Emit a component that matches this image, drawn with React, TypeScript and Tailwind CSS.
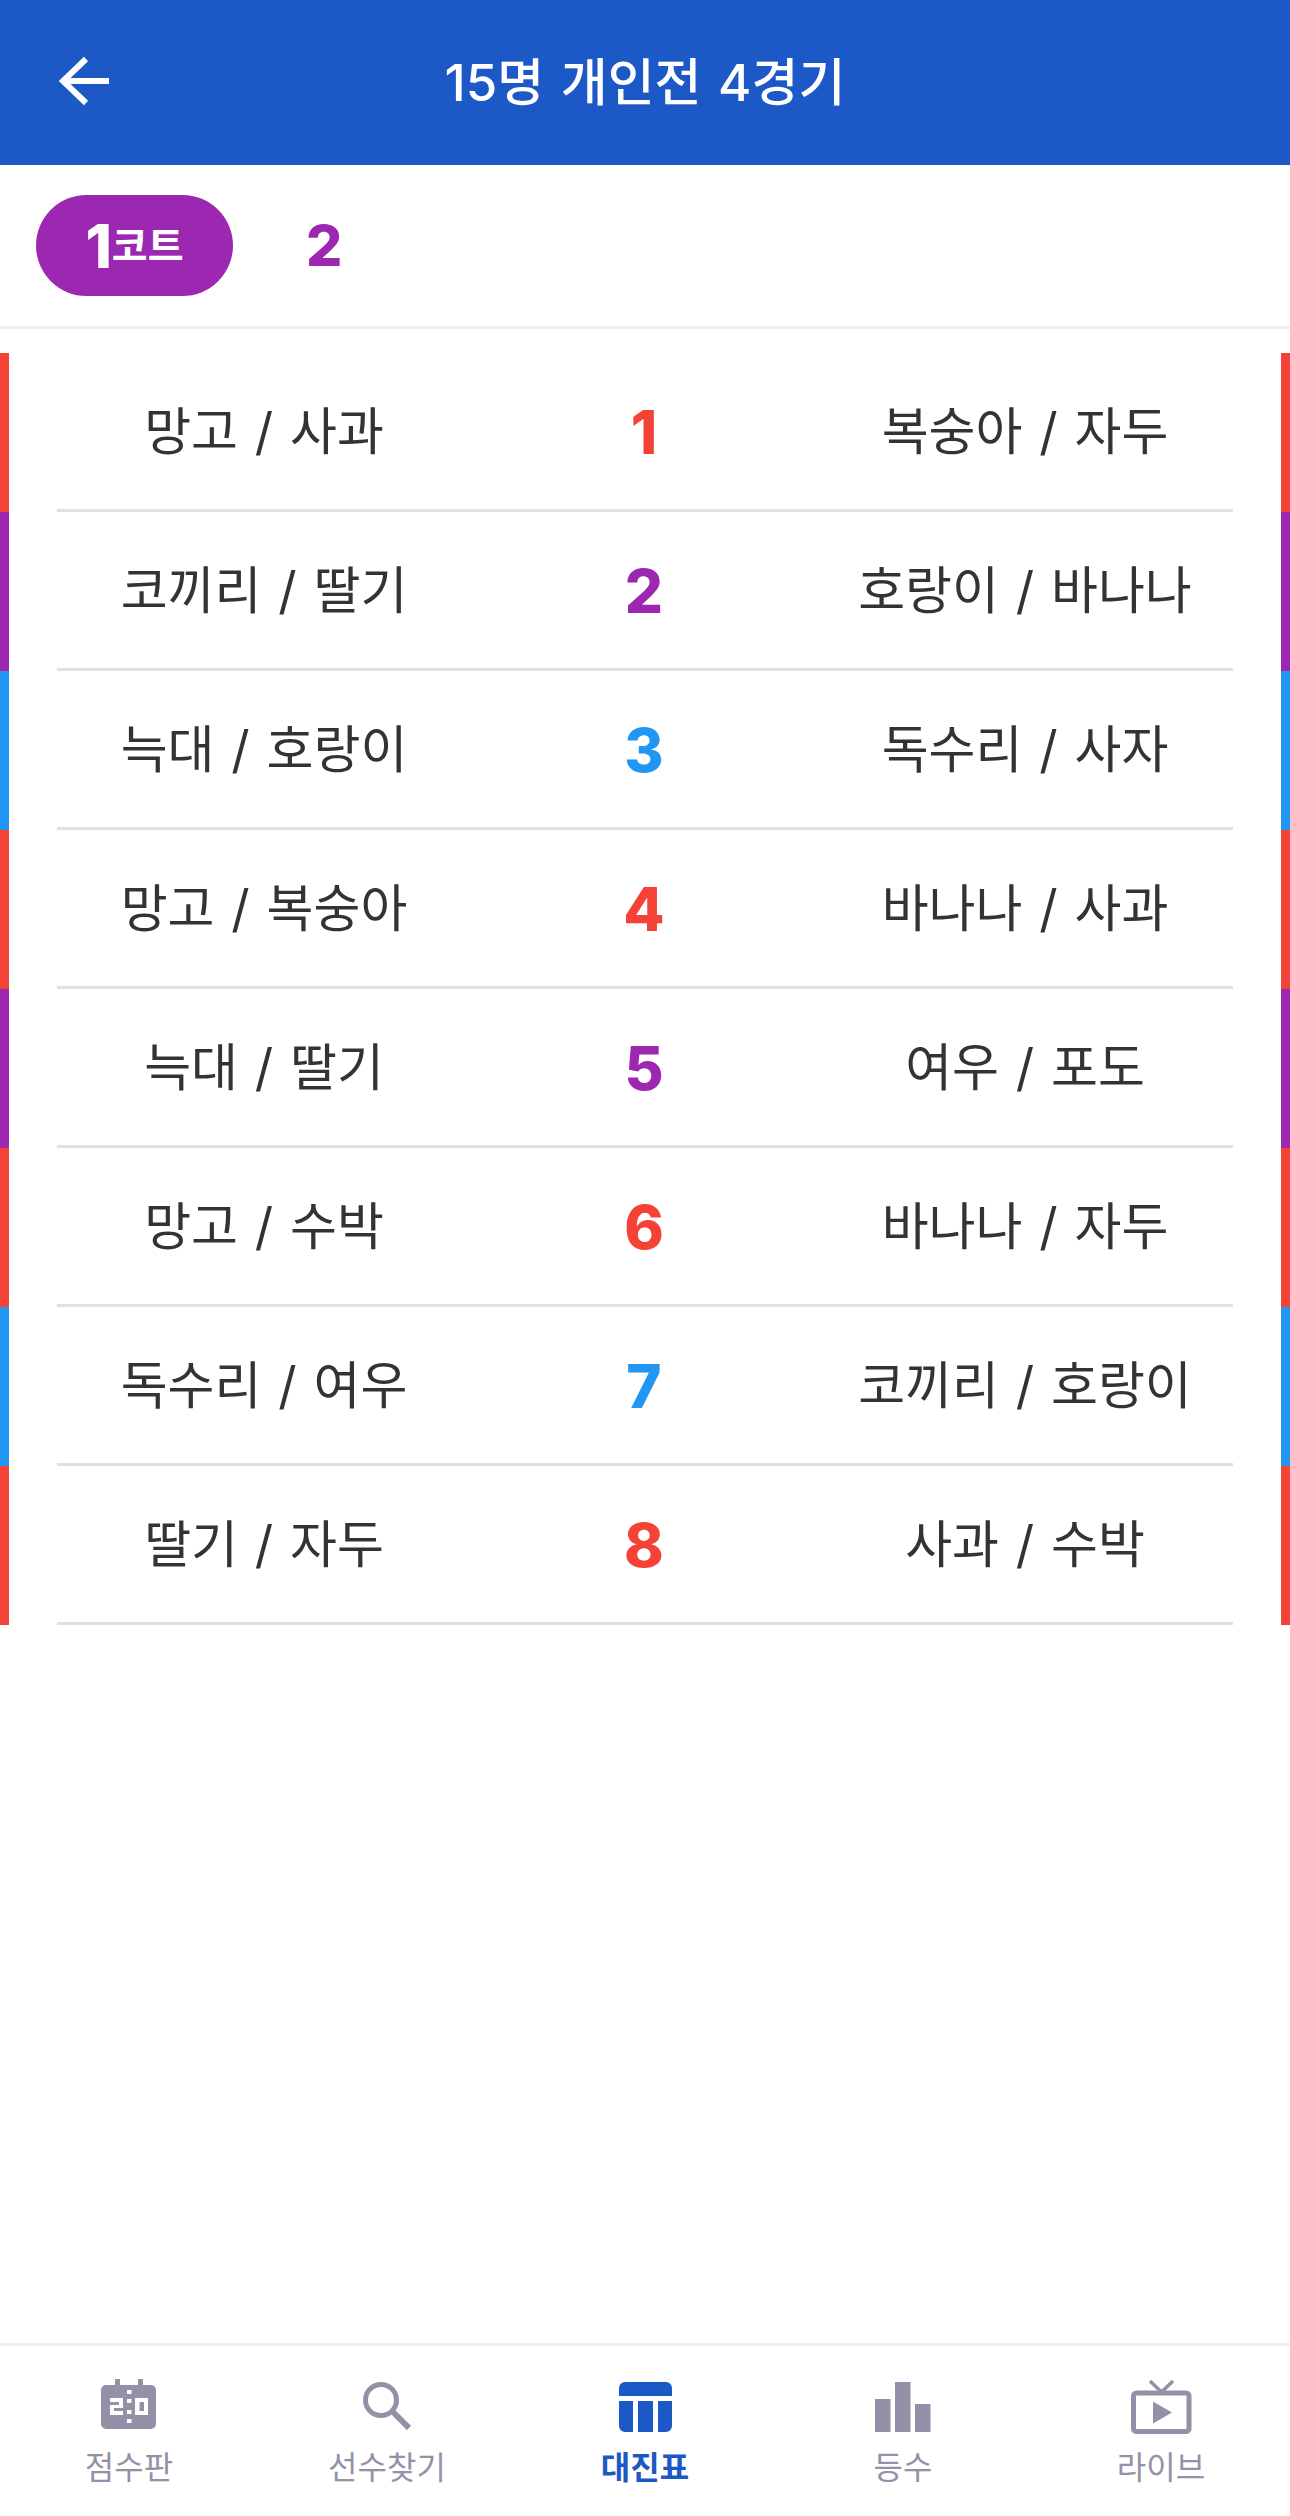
const font = { fontFamily: 'Inter, "Noto Sans CJK KR", "Liberation Sans", sans-serif' };

const rows: [string, string, string][] = [
  ["망고 / 사과", "복숭아 / 자두", "red"],
  ["코끼리 / 딸기", "호랑이 / 바나나", "purple"],
  ["늑대 / 호랑이", "독수리 / 사자", "blue"],
  ["망고 / 복숭아", "바나나 / 사과", "red"],
  ["늑대 / 딸기", "여우 / 포도", "purple"],
  ["망고 / 수박", "바나나 / 자두", "red"],
  ["독수리 / 여우", "코끼리 / 호랑이", "blue"],
  ["딸기 / 자두", "사과 / 수박", "red"],
];

const barClass: Record<string, string> = { red: "bg-[#f44336]", purple: "bg-[#9c27b0]", blue: "bg-[#2196f3]" };
const textClass: Record<string, string> = { red: "text-[#f44336]", purple: "text-[#9c27b0]", blue: "text-[#2196f3]" };

function Scoreboard() {
  return (
    <svg width="56" height="50" viewBox="0 0 56 50" className="text-[#9590a8]">
      <path fill="currentColor" d="M14 0h5v6h18V0h5v6h8a5 5 0 0 1 5 5v34a5 5 0 0 1-5 5H5a5 5 0 0 1-5-5V11a5 5 0 0 1 5-5h9z" />
      <g fill="#fff">
        <rect x="26" y="11" width="4.500" height="4" /><rect x="26" y="20" width="4.500" height="4" /><rect x="26" y="31" width="4.500" height="4" /><rect x="26" y="40" width="4.500" height="4" />
        <path d="M9 19h13v10H13v3h9v4H9V26h9v-3H9z" />
        <path fillRule="evenodd" d="M34 19h13v17H34zM38.500 23v9h4.500v-9z" />
      </g>
    </svg>
  );
}

function SearchIcon() {
  return (
    <svg width="48" height="48" viewBox="0 0 48 48" fill="none" stroke="currentColor" className="mt-[3px] text-[#9590a8]">
      <circle cx="18" cy="18" r="15.500" strokeWidth="5" />
      <path d="M29 29l17 17" strokeWidth="6" />
    </svg>
  );
}

function TableIcon() {
  return (
    <svg width="53" height="50" viewBox="0 0 53 50" className="mt-[3px] text-[#1c58c6]">
      <path fill="currentColor" d="M6 0h41a6 6 0 0 1 6 6v8H0V6a6 6 0 0 1 6-6zM0 19h14v31H6a6 6 0 0 1-6-6zM19 19h15v31H19zM39 19h14v25a6 6 0 0 1-6 6h-8z" />
    </svg>
  );
}

function BarsIcon() {
  return (
    <svg width="56" height="50" viewBox="0 0 56 50" className="mt-[3px] text-[#9590a8]">
      <path fill="currentColor" d="M0 17h15.500v33H0zM20 0h15.500v50H20zM40 22h15.500v28H40z" />
    </svg>
  );
}

function TvIcon() {
  return (
    <svg width="61" height="55" viewBox="0 0 61 55" className="text-[#9590a8]">
      <path fill="none" stroke="currentColor" strokeWidth="3.500" d="M19 2l11.500 11L42 2" />
      <rect x="2.500" y="14" width="55.500" height="38.500" rx="3" fill="none" stroke="currentColor" strokeWidth="5" />
      <path fill="currentColor" d="M22 22.500l19 11-19 11z" />
    </svg>
  );
}

const nav = [
  { label: "점수판", icon: <Scoreboard /> },
  { label: "선수찾기", icon: <SearchIcon /> },
  { label: "대진표", icon: <TableIcon />, active: true },
  { label: "등수", icon: <BarsIcon /> },
  { label: "라이브", icon: <TvIcon /> },
];

export default function App() {
  return (
    <div className="flex h-[2516px] w-[1290px] flex-col bg-white" style={font}>
      <header className="relative flex h-[165px] shrink-0 items-center justify-center bg-[#1c58c6]">
        <svg width="50" height="50" viewBox="0 0 50 50" className="absolute left-[59px] top-[56px]" fill="none" stroke="#fff" strokeWidth="6">
          <path d="M50 25H5M27 3L4 25l23 22" />
        </svg>
        <h1 className="text-[51px] font-medium leading-none text-white [word-spacing:3px]">15명 개인전 4경기</h1>
      </header>

      <div className="flex h-[164px] shrink-0 items-start gap-[73px] border-b-[3px] border-[#eeeeee] pl-[36px] pt-[30px]">
        <div className="flex h-[101px] w-[197px] items-center justify-center rounded-full bg-[#9c27b0] font-bold text-white">
          <span className="text-[60px] font-extrabold leading-none">1</span>
          <span className="text-[39px] leading-none">코트</span>
        </div>
        <div className="flex h-[101px] items-center text-[57px] font-extrabold leading-none text-[#9c27b0]">2</div>
      </div>

      <div className="flex-1 pt-[24px]">
        {rows.map(([left, right, color], i) => (
          <div key={i} className="flex h-[159px] justify-between">
            <div className={`w-[9px] ${barClass[color]}`} />
            <div className="grid w-[1176px] grid-cols-[414px_1fr_416px] items-center border-b-[3px] border-[#e0e0e0] pt-[2px] text-[51px] leading-[70px] text-[#333333] [word-spacing:2.500px]">
              <div className="text-center">{left}</div>
              <div className={`text-center text-[60px] font-extrabold ${textClass[color]}`}>{i + 1}</div>
              <div className="text-center">{right}</div>
            </div>
            <div className={`w-[9px] ${barClass[color]}`} />
          </div>
        ))}
      </div>

      <nav className="flex h-[173px] shrink-0 border-t-[3px] border-[#eeeeee]">
        {nav.map((n) => (
          <div key={n.label} className="flex flex-1 flex-col items-center pt-[33px]">
            <div className="flex h-[56px] items-start justify-center">{n.icon}</div>
            <div className={`mt-[9px] text-[32px] leading-[48px] ${n.active ? "font-bold text-[#1c58c6]" : "text-[#9590a8]"}`}>{n.label}</div>
          </div>
        ))}
      </nav>
    </div>
  );
}
